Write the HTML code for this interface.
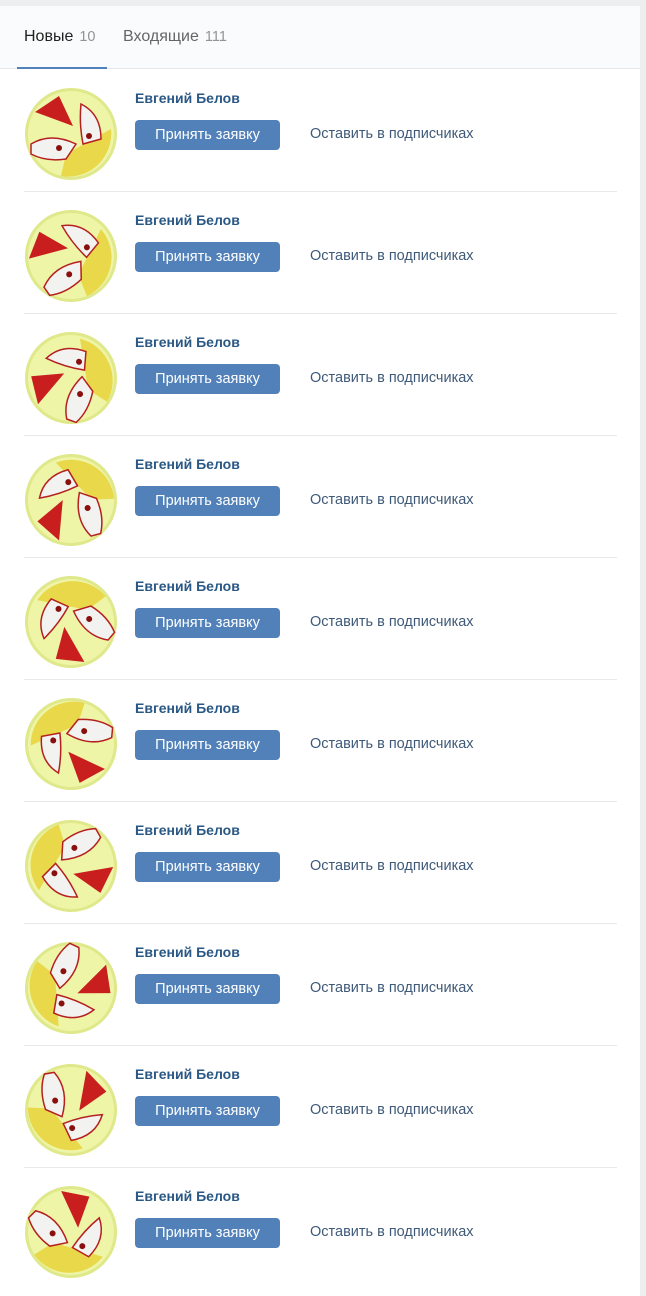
<!DOCTYPE html>
<html><head><meta charset="utf-8"><style>
*{margin:0;padding:0;box-sizing:border-box}
body{width:646px;height:1280px;background:#edeef0;font-family:"Liberation Sans",Arial,sans-serif;overflow:hidden;position:relative}
.card{position:absolute;left:0;top:6px;width:640px;height:1290px;background:#fff;border-radius:0 4px 0 0}
.head{height:63px;background:#fafbfc;border-bottom:1px solid #e7e8ec;position:relative}
.tab{position:absolute;top:22px;font-size:16px}
.t1{left:24px;color:#222}
.t2{left:123px;color:#656565}
.cnt{color:#939393;font-size:14.5px;margin-left:6px}
.ul{position:absolute;left:17px;top:61px;width:90px;height:2px;background:#5181b8}
.row{position:absolute;left:0;width:640px;height:122px}
.av{position:absolute;left:24px;top:17px;width:94px;height:94px}
.name{position:absolute;left:135px;top:20px;font-size:14px;font-weight:bold;color:#2a5885}
.btn{position:absolute;left:135px;top:50px;width:145px;height:30px;background:#5181b8;border-radius:4px;color:#fff;font-size:14.5px;text-align:center;line-height:30px}
.lnk{position:absolute;left:310px;top:56px;font-size:14.5px;color:#3f5a78}
.sep{position:absolute;left:24px;right:23px;bottom:0;height:1px;background:#e7e8ec}
</style></head><body>
<div class="card">
<div class="head"><span class="tab t1">Новые<span class="cnt">10</span></span><span class="tab t2">Входящие<span class="cnt">111</span></span><div class="ul"></div></div>
</div>
<div class="row" style="top:70px"><svg class="av" viewBox="-47 -47 94 94"><g transform="rotate(0)"><circle r="46" fill="#dfe88a"/><circle r="43" fill="#eef5a6"/><path d="M-5 20 L40 -5 A43 43 0 0 1 -10 42 Z" fill="#e9d84a"/><path d="M-36 -22 L-12 -38 L2 -8 Z" fill="#c91e1e"/><path d="M10 -30 Q30 -20 30 5 L12 10 Q8 -10 10 -30 Z" fill="#f2f2f0" stroke="#b52020" stroke-width="1.5"/><path d="M-40 10 Q-20 -2 5 10 L-5 25 Q-25 28 -40 20 Z" fill="#f2f2f0" stroke="#b52020" stroke-width="1.5"/><circle cx="18" cy="2" r="3" fill="#8a1010"/><circle cx="-12" cy="14" r="3" fill="#8a1010"/></g></svg><div class="name">Евгений Белов</div><div class="btn">Принять заявку</div><div class="lnk">Оставить в подписчиках</div><div class="sep"></div></div>
<div class="row" style="top:192px"><svg class="av" viewBox="-47 -47 94 94"><g transform="rotate(-35)"><circle r="46" fill="#dfe88a"/><circle r="43" fill="#eef5a6"/><path d="M-5 20 L40 -5 A43 43 0 0 1 -10 42 Z" fill="#e9d84a"/><path d="M-36 -22 L-12 -38 L2 -8 Z" fill="#c91e1e"/><path d="M10 -30 Q30 -20 30 5 L12 10 Q8 -10 10 -30 Z" fill="#f2f2f0" stroke="#b52020" stroke-width="1.5"/><path d="M-40 10 Q-20 -2 5 10 L-5 25 Q-25 28 -40 20 Z" fill="#f2f2f0" stroke="#b52020" stroke-width="1.5"/><circle cx="18" cy="2" r="3" fill="#8a1010"/><circle cx="-12" cy="14" r="3" fill="#8a1010"/></g></svg><div class="name">Евгений Белов</div><div class="btn">Принять заявку</div><div class="lnk">Оставить в подписчиках</div><div class="sep"></div></div>
<div class="row" style="top:314px"><svg class="av" viewBox="-47 -47 94 94"><g transform="rotate(-70)"><circle r="46" fill="#dfe88a"/><circle r="43" fill="#eef5a6"/><path d="M-5 20 L40 -5 A43 43 0 0 1 -10 42 Z" fill="#e9d84a"/><path d="M-36 -22 L-12 -38 L2 -8 Z" fill="#c91e1e"/><path d="M10 -30 Q30 -20 30 5 L12 10 Q8 -10 10 -30 Z" fill="#f2f2f0" stroke="#b52020" stroke-width="1.5"/><path d="M-40 10 Q-20 -2 5 10 L-5 25 Q-25 28 -40 20 Z" fill="#f2f2f0" stroke="#b52020" stroke-width="1.5"/><circle cx="18" cy="2" r="3" fill="#8a1010"/><circle cx="-12" cy="14" r="3" fill="#8a1010"/></g></svg><div class="name">Евгений Белов</div><div class="btn">Принять заявку</div><div class="lnk">Оставить в подписчиках</div><div class="sep"></div></div>
<div class="row" style="top:436px"><svg class="av" viewBox="-47 -47 94 94"><g transform="rotate(-105)"><circle r="46" fill="#dfe88a"/><circle r="43" fill="#eef5a6"/><path d="M-5 20 L40 -5 A43 43 0 0 1 -10 42 Z" fill="#e9d84a"/><path d="M-36 -22 L-12 -38 L2 -8 Z" fill="#c91e1e"/><path d="M10 -30 Q30 -20 30 5 L12 10 Q8 -10 10 -30 Z" fill="#f2f2f0" stroke="#b52020" stroke-width="1.5"/><path d="M-40 10 Q-20 -2 5 10 L-5 25 Q-25 28 -40 20 Z" fill="#f2f2f0" stroke="#b52020" stroke-width="1.5"/><circle cx="18" cy="2" r="3" fill="#8a1010"/><circle cx="-12" cy="14" r="3" fill="#8a1010"/></g></svg><div class="name">Евгений Белов</div><div class="btn">Принять заявку</div><div class="lnk">Оставить в подписчиках</div><div class="sep"></div></div>
<div class="row" style="top:558px"><svg class="av" viewBox="-47 -47 94 94"><g transform="rotate(-140)"><circle r="46" fill="#dfe88a"/><circle r="43" fill="#eef5a6"/><path d="M-5 20 L40 -5 A43 43 0 0 1 -10 42 Z" fill="#e9d84a"/><path d="M-36 -22 L-12 -38 L2 -8 Z" fill="#c91e1e"/><path d="M10 -30 Q30 -20 30 5 L12 10 Q8 -10 10 -30 Z" fill="#f2f2f0" stroke="#b52020" stroke-width="1.5"/><path d="M-40 10 Q-20 -2 5 10 L-5 25 Q-25 28 -40 20 Z" fill="#f2f2f0" stroke="#b52020" stroke-width="1.5"/><circle cx="18" cy="2" r="3" fill="#8a1010"/><circle cx="-12" cy="14" r="3" fill="#8a1010"/></g></svg><div class="name">Евгений Белов</div><div class="btn">Принять заявку</div><div class="lnk">Оставить в подписчиках</div><div class="sep"></div></div>
<div class="row" style="top:680px"><svg class="av" viewBox="-47 -47 94 94"><g transform="rotate(-175)"><circle r="46" fill="#dfe88a"/><circle r="43" fill="#eef5a6"/><path d="M-5 20 L40 -5 A43 43 0 0 1 -10 42 Z" fill="#e9d84a"/><path d="M-36 -22 L-12 -38 L2 -8 Z" fill="#c91e1e"/><path d="M10 -30 Q30 -20 30 5 L12 10 Q8 -10 10 -30 Z" fill="#f2f2f0" stroke="#b52020" stroke-width="1.5"/><path d="M-40 10 Q-20 -2 5 10 L-5 25 Q-25 28 -40 20 Z" fill="#f2f2f0" stroke="#b52020" stroke-width="1.5"/><circle cx="18" cy="2" r="3" fill="#8a1010"/><circle cx="-12" cy="14" r="3" fill="#8a1010"/></g></svg><div class="name">Евгений Белов</div><div class="btn">Принять заявку</div><div class="lnk">Оставить в подписчиках</div><div class="sep"></div></div>
<div class="row" style="top:802px"><svg class="av" viewBox="-47 -47 94 94"><g transform="rotate(-210)"><circle r="46" fill="#dfe88a"/><circle r="43" fill="#eef5a6"/><path d="M-5 20 L40 -5 A43 43 0 0 1 -10 42 Z" fill="#e9d84a"/><path d="M-36 -22 L-12 -38 L2 -8 Z" fill="#c91e1e"/><path d="M10 -30 Q30 -20 30 5 L12 10 Q8 -10 10 -30 Z" fill="#f2f2f0" stroke="#b52020" stroke-width="1.5"/><path d="M-40 10 Q-20 -2 5 10 L-5 25 Q-25 28 -40 20 Z" fill="#f2f2f0" stroke="#b52020" stroke-width="1.5"/><circle cx="18" cy="2" r="3" fill="#8a1010"/><circle cx="-12" cy="14" r="3" fill="#8a1010"/></g></svg><div class="name">Евгений Белов</div><div class="btn">Принять заявку</div><div class="lnk">Оставить в подписчиках</div><div class="sep"></div></div>
<div class="row" style="top:924px"><svg class="av" viewBox="-47 -47 94 94"><g transform="rotate(-245)"><circle r="46" fill="#dfe88a"/><circle r="43" fill="#eef5a6"/><path d="M-5 20 L40 -5 A43 43 0 0 1 -10 42 Z" fill="#e9d84a"/><path d="M-36 -22 L-12 -38 L2 -8 Z" fill="#c91e1e"/><path d="M10 -30 Q30 -20 30 5 L12 10 Q8 -10 10 -30 Z" fill="#f2f2f0" stroke="#b52020" stroke-width="1.5"/><path d="M-40 10 Q-20 -2 5 10 L-5 25 Q-25 28 -40 20 Z" fill="#f2f2f0" stroke="#b52020" stroke-width="1.5"/><circle cx="18" cy="2" r="3" fill="#8a1010"/><circle cx="-12" cy="14" r="3" fill="#8a1010"/></g></svg><div class="name">Евгений Белов</div><div class="btn">Принять заявку</div><div class="lnk">Оставить в подписчиках</div><div class="sep"></div></div>
<div class="row" style="top:1046px"><svg class="av" viewBox="-47 -47 94 94"><g transform="rotate(-280)"><circle r="46" fill="#dfe88a"/><circle r="43" fill="#eef5a6"/><path d="M-5 20 L40 -5 A43 43 0 0 1 -10 42 Z" fill="#e9d84a"/><path d="M-36 -22 L-12 -38 L2 -8 Z" fill="#c91e1e"/><path d="M10 -30 Q30 -20 30 5 L12 10 Q8 -10 10 -30 Z" fill="#f2f2f0" stroke="#b52020" stroke-width="1.5"/><path d="M-40 10 Q-20 -2 5 10 L-5 25 Q-25 28 -40 20 Z" fill="#f2f2f0" stroke="#b52020" stroke-width="1.5"/><circle cx="18" cy="2" r="3" fill="#8a1010"/><circle cx="-12" cy="14" r="3" fill="#8a1010"/></g></svg><div class="name">Евгений Белов</div><div class="btn">Принять заявку</div><div class="lnk">Оставить в подписчиках</div><div class="sep"></div></div>
<div class="row" style="top:1168px"><svg class="av" viewBox="-47 -47 94 94"><g transform="rotate(-315)"><circle r="46" fill="#dfe88a"/><circle r="43" fill="#eef5a6"/><path d="M-5 20 L40 -5 A43 43 0 0 1 -10 42 Z" fill="#e9d84a"/><path d="M-36 -22 L-12 -38 L2 -8 Z" fill="#c91e1e"/><path d="M10 -30 Q30 -20 30 5 L12 10 Q8 -10 10 -30 Z" fill="#f2f2f0" stroke="#b52020" stroke-width="1.5"/><path d="M-40 10 Q-20 -2 5 10 L-5 25 Q-25 28 -40 20 Z" fill="#f2f2f0" stroke="#b52020" stroke-width="1.5"/><circle cx="18" cy="2" r="3" fill="#8a1010"/><circle cx="-12" cy="14" r="3" fill="#8a1010"/></g></svg><div class="name">Евгений Белов</div><div class="btn">Принять заявку</div><div class="lnk">Оставить в подписчиках</div></div>
</body></html>
